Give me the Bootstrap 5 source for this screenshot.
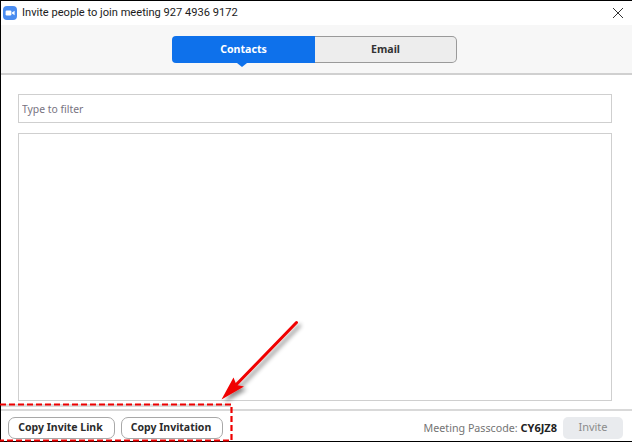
<!DOCTYPE html>
<html lang="en">
<head>
<meta charset="utf-8">
<title>Invite people</title>
<link href="https://cdn.jsdelivr.net/npm/bootstrap@5.3.0/dist/css/bootstrap.min.css" rel="stylesheet">
<style>
html,body{margin:0;height:442px;overflow:hidden;background:#fff}
body{font-family:"Noto Sans","Open Sans",sans-serif;color:#222}
.win{position:relative;width:632px;height:442px;border-top:1px solid #000;border-left:1px solid #000;border-bottom:1px solid #000;background:#fff}
.titlebar{height:24px;padding-left:2px;font-family:Roboto,sans-serif;font-size:11.1px;gap:5px;color:#1c1c1c}
.tabband{height:50px;background:#f7f7f7;border-bottom:2px solid #d0d0d0;padding-top:11px}
.segs{position:relative;width:285px;height:27px;margin-left:171px}
.seg{height:27px;font-size:10.6px;font-weight:700;border:0;padding:0;border-radius:0;box-shadow:none}
.seg-on{width:143px;background:#0e71eb;color:#fff;border-radius:4px 0 0 4px}
.seg-off{width:142px;background:#ededed;color:#333;border:1px solid #9a9a9a;border-left:0;border-radius:0 5px 5px 0}
.seg-notch{position:absolute;left:65px;top:27px;width:0;height:0;border-left:5px solid transparent;border-right:5px solid transparent;border-top:4px solid #0e71eb}
.bodyarea{padding:19px 20px 0 17px;gap:10px}
.filter{height:29px;border:1px solid #cfcfcf;border-radius:0;font-size:10.4px;padding:0 3px;color:#444}
.filter::placeholder{color:#77737f;opacity:1}
.listarea{height:268px;border:1px solid #cfcfcf}
.foot{margin-top:8px;border-top:2px solid #d9d9d9;height:32px;padding:6px 9px 0 7px}
.copybtn{height:22px;font-size:10.5px;font-weight:700;padding:0 2px 2px 0;border:1px solid #a8a8a8;border-radius:7px;color:#2b2b2b;background:#fff;line-height:1}
.copy-a{width:107px}
.copy-b{width:102px;margin-left:6px}
.pass{font-size:10.7px;color:#747474;margin-right:6px;margin-top:3px}
.pass b{color:#222;font-weight:700;font-size:11px}
.invbtn{width:60px;height:22px;padding:0 0 3px;border:0;border-radius:5px;background:#e9ebee;color:#8c8c8c;font-size:11px;line-height:1}
.closex{position:absolute;right:8px;top:6px;line-height:0}
.notes{position:absolute;left:-1px;top:-1px;pointer-events:none}
</style>
</head>
<body>
<div class="win d-flex flex-column">
  <div class="titlebar d-flex align-items-center">
    <svg width="14" height="14" viewBox="0 0 14 14"><rect width="14" height="14" rx="4" fill="#4a8cf0"/><rect x="2.600" y="4.500" width="5.800" height="5" rx="1.200" fill="#fff"/><path d="M9 6.400l2.600-1.700v4.600L9 7.600z" fill="#fff"/></svg>
    <span>Invite people to join meeting 927 4936 9172</span>
  </div>
  <div class="closex"><svg width="12" height="12" viewBox="0 0 12 12"><path d="M1 1l10 10M11 1L1 11" stroke="#333" stroke-width="1" fill="none"/></svg></div>
  <div class="tabband">
    <div class="segs d-flex">
      <button class="btn seg seg-on" type="button">Contacts</button>
      <button class="btn seg seg-off" type="button">Email</button>
      <span class="seg-notch"></span>
    </div>
  </div>
  <div class="bodyarea d-flex flex-column">
    <input class="form-control filter" type="text" placeholder="Type to filter">
    <div class="listarea"></div>
  </div>
  <div class="foot d-flex align-items-start">
    <button class="btn copybtn copy-a" type="button">Copy Invite Link</button>
    <button class="btn copybtn copy-b" type="button">Copy Invitation</button>
    <div class="ms-auto d-flex align-items-start">
      <span class="pass">Meeting Passcode: <b>CY6JZ8</b></span>
      <button class="btn invbtn" type="button">Invite</button>
    </div>
  </div>
  <svg class="notes" width="632" height="442" viewBox="0 0 632 442">
    <defs><filter id="sh" x="-20%" y="-20%" width="150%" height="150%"><feDropShadow dx="3" dy="3" stdDeviation="2" flood-color="#000" flood-opacity=".45"/></filter></defs>
    <path d="M1 405.500H231" stroke="#bbb" stroke-width="3" fill="none" opacity=".5"/>
    <g filter="url(#sh)">
      <path d="M296.500 322.500L232 389" stroke="#f00000" stroke-width="3" stroke-linecap="round" fill="none"/>
      <path d="M221.500 399.500L233.500 377.500L236.500 385L244 386.500z" fill="#f00000"/>
    </g>
    <path d="M0 404.500H231.500V440.500H0" fill="none" stroke="#ee0000" stroke-width="2.200" stroke-dasharray="6 3"/>
  </svg>
</div>
</body>
</html>
